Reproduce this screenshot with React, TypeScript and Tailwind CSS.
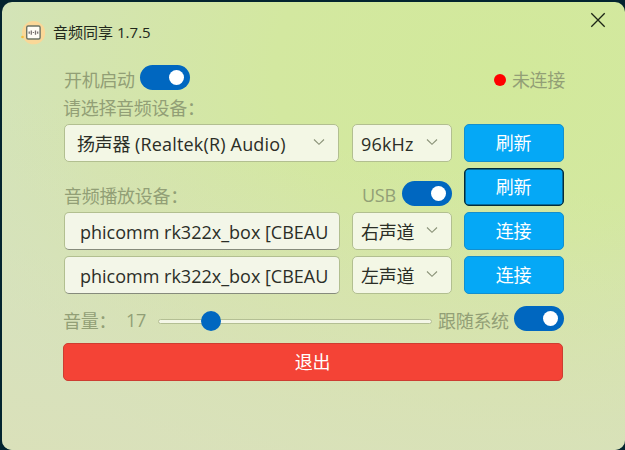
import type { ReactNode } from 'react';

const latin = "font-['Open_Sans','Noto_Sans_CJK_SC',sans-serif]";

function Toggle() {
  return (
    <button className="flex h-[25px] w-[50px] shrink-0 items-center justify-end rounded-full bg-[#0067c0] pr-[6px]">
      <span className="h-[15px] w-[15px] rounded-full bg-white" />
    </button>
  );
}

function Label({ children, className = '' }: { children: ReactNode; className?: string }) {
  return (
    <span className={`whitespace-nowrap text-[18px] leading-[24px] tracking-[-0.3px] text-[#929f76] ${className}`}>
      {children}
    </span>
  );
}

function Select({ children, className = '' }: { children: ReactNode; className?: string }) {
  return (
    <div className={`flex h-[38px] shrink-0 items-center justify-between rounded-[5px] border border-[#b2bf90] bg-[#f3f7e5] pr-[13px] text-[#2b2e27] ${className}`}>
      {children}
      <svg width="12" height="8" viewBox="0 0 12 8" className="-mt-[3px]" fill="none" stroke="#8a9278" strokeWidth="1.1">
        <path d="M1 1.5 6 6.3 11 1.5" />
      </svg>
    </div>
  );
}

function Device() {
  return (
    <div className="flex h-[38px] w-[276px] items-center overflow-hidden rounded-[5px] border border-[#b2bf90] border-b-[#868b7c] bg-[#f3f6e8] pl-[15px] text-[#2b2e27]">
      <span className="mt-[2px] whitespace-nowrap text-[18px] leading-[24px]">phicomm rk322x_box [CBEAU</span>
    </div>
  );
}

function Action({ children, focused = false }: { children: ReactNode; focused?: boolean }) {
  return (
    <button className={`flex h-[38px] w-[100px] shrink-0 items-center justify-center rounded-[5px] border bg-[#05a8f6] pr-px text-[18px] leading-[24px] tracking-[-0.3px] text-white ${focused ? 'border-[#062c3a] ring-[0.5px] ring-inset ring-[#062c3a]' : 'border-[#138fce]'}`}>
      {children}
    </button>
  );
}

export default function App() {
  return (
    <div className={`h-[450px] w-[625px] overflow-hidden bg-[#03242f] pl-[2px] pt-[2px] ${latin}`}>
      <main className="h-[448px] w-[623px] rounded-[10px] bg-[radial-gradient(ellipse_at_80%_15%,#d2e99b_0%,#d3e8a0_32%,#d4e4b0_60%,#d2e3c1_85%)]">
        <div className="h-full rounded-[10px] bg-[linear-gradient(190deg,transparent_35%,#dce0b8cc_100%)]">
          <header className="flex h-[62px] items-start justify-between pl-[19px] pr-[19px]">
            <div className="flex items-center pt-[18px]">
              <svg width="25" height="25" viewBox="0 0 25 25">
                <circle cx="12.6" cy="12.7" r="11.6" fill="#fad898" />
                <circle cx="1.5" cy="17" r="1.3" fill="#f6bd3c" />
                <rect x="5.7" y="6" width="13.4" height="13" rx="1.5" fill="#fffdf5" stroke="#6d7464" strokeWidth="1.4" />
                <path d="M8.2 11.5v2.2M10.3 10.4v4.4M12.4 12v1M14.5 10.4v4.4M16.7 11.5v2.2" stroke="#78716f" strokeWidth="1.3" />
              </svg>
              <h1 className="ml-[7px] mt-[-1px] text-[15px] font-normal leading-[22px] tracking-[0.02px] text-[#22281c]">音频同享 1.7.5</h1>
            </div>
            <button className="mt-[10px] h-[16px] w-[16px]">
              <svg width="16" height="16" viewBox="0 0 16 16" fill="none" stroke="#1d2517" strokeWidth="1.3">
                <path d="m1.3 1.3 13.4 13.4M14.7 1.3 1.3 14.7" />
              </svg>
            </button>
          </header>

          <section className="ml-[62px] w-[500px]">
            <div className="flex h-[28px] items-start justify-between">
              <div className="flex">
                <Label className="mt-[4px] w-[76px]">开机启动</Label>
                <div className="mt-px"><Toggle /></div>
              </div>
              <div className="-mr-px flex items-center">
                <span className="mr-[6px] mt-[4px] h-[12px] w-[12px] rounded-full bg-[#ff0000]" />
                <Label className="mt-[4px]">未连接</Label>
              </div>
            </div>
            <div className="-ml-px flex h-[32px] pt-[4px]">
              <Label>请选择音频设备：</Label>
            </div>
            <div className="flex">
              <Select className="w-[275px] pl-[12px]">
                <span className="mt-[2px] whitespace-nowrap text-[18px] leading-[24px] tracking-[-0.3px]">
                  扬声器<span className="tracking-[0.18px]"> (Realtek(R) Audio)</span>
                </span>
              </Select>
              <Select className="ml-[13px] w-[100px] pl-[8px]">
                <span className="mt-[2px] text-[18px] leading-[24px] tracking-[0.15px]">96kHz</span>
              </Select>
              <div className="ml-[12px]"><Action>刷新</Action></div>
            </div>
            <div className="mt-[6px] flex h-[38px]">
              <Label className="mt-[16px] w-[298px]">音频播放设备：</Label>
              <Label className="mt-[15px] w-[40px]">USB</Label>
              <div className="mt-[13px]"><Toggle /></div>
              <div className="ml-[12px]"><Action focused>刷新</Action></div>
            </div>
            {['右声道', '左声道'].map((channel) => (
              <div key={channel} className="mt-[6px] flex">
                <Device />
                <Select className="ml-[12px] w-[100px] pl-[8px]">
                  <span className="mt-[2px] whitespace-nowrap text-[18px] leading-[24px] tracking-[-0.3px]">{channel}</span>
                </Select>
                <div className="ml-[12px]"><Action>连接</Action></div>
              </div>
            ))}
            <div className="mt-[6px] flex h-[43px]">
              <Label className="-ml-px mt-[9px] w-[63px]">音量：</Label>
              <Label className="mt-[8px] w-[32px]">17</Label>
              <div className="relative mt-[19px] h-[5px] w-[274px] rounded-full border border-[#b4bf94] bg-[#f4f7e7]">
                <span className="absolute left-[42px] top-[-9px] h-[20px] w-[20px] rounded-full bg-[#0067c0]" />
              </div>
              <Label className="ml-[6px] mt-[9px] w-[76px]">跟随系统</Label>
              <div className="mt-[6px]"><Toggle /></div>
            </div>
            <button className="-ml-px flex h-[38px] w-[500px] items-center justify-center rounded-[5px] border border-[#cd3d31] bg-[#f44336] pr-px text-[18px] leading-[24px] tracking-[-0.3px] text-white">
              退出
            </button>
          </section>
        </div>
      </main>
    </div>
  );
}
